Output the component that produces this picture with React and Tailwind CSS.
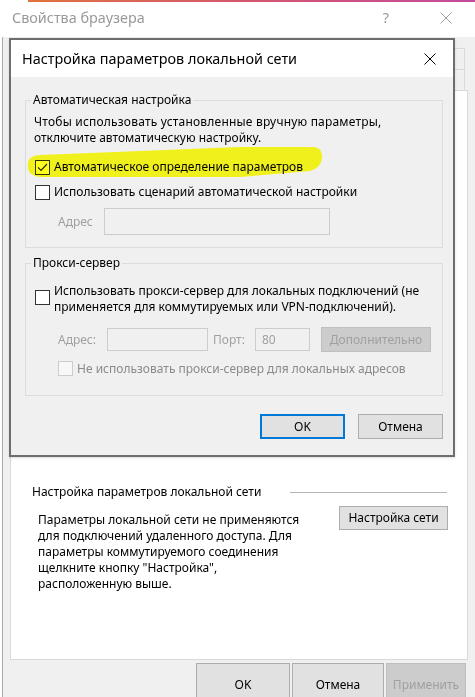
function Checkbox({ checked, disabled, className = '' }) {
  return (
    <span
      className={`flex h-[15px] w-[15px] shrink-0 items-center justify-center border ${
        disabled ? 'border-[#cccccc] bg-[#f7f7f7]' : 'border-[#333333] bg-white'
      } ${className}`}
    >
      {checked && (
        <svg width="11" height="9" viewBox="0 0 11 9">
          <path d="M1 4.3 L4 7.4 L10 1" fill="none" stroke="#222222" strokeWidth="1.1" />
        </svg>
      )}
    </span>
  )
}

function CloseIcon({ color = '#000000', size = 12 }) {
  return (
    <svg width={size} height={size} viewBox="0 0 12 12" className="shrink-0">
      <path d="M0.5 0.5 L11.5 11.5 M11.5 0.5 L0.5 11.5" stroke={color} strokeWidth="1" />
    </svg>
  )
}

function Tabs() {
  return (
    <div className="ml-[7px] w-[455px] pt-[11px]">
      <div className="flex h-[21px]">
        <div className="w-[150px] border border-b-0 border-[#d9d9d9]" />
        <div className="w-[150px] border border-b-0 border-l-0 border-[#d9d9d9]" />
        <div className="flex-1 border border-b-0 border-l-0 border-[#d9d9d9]" />
      </div>
      <div className="flex h-[21px]">
        <div className="w-[110px] border border-b-0 border-[#d9d9d9]" />
        <div className="w-[120px] border border-b-0 border-l-0 border-[#d9d9d9]" />
        <div className="w-[110px] border border-b-0 border-l-0 border-[#d9d9d9]" />
        <div className="flex-1 border border-b-0 border-l-0 border-[#d9d9d9]" />
      </div>
    </div>
  )
}

function LanDialog() {
  return (
    <div className="absolute left-[9px] top-[38px] flex h-[419px] w-[446px] flex-col border-2 border-[#6e6e6e] bg-[#f0f0f0] shadow-sm">
      <div className="flex h-[37px] shrink-0 items-center bg-white pl-[11px] pr-[17px] text-[14.4px]">
        <span>Настройка параметров локальной сети</span>
        <span className="ml-auto">
          <CloseIcon />
        </span>
      </div>

      <div className="pl-[14px] pr-[10px]">
        {/* Automatic configuration */}
        <fieldset className="mt-[15px] border border-[#dcdcdc] pb-[12px]">
          <legend className="ml-[5px] px-[2px]">Автоматическая настройка</legend>
          <div className="pl-[8px]">
            <p className="mt-[6px] whitespace-nowrap">
              <span className="tracking-[0.2px]">Чтобы использовать установленные вручную параметры,</span>
              <br />
              отключите автоматическую настройку.
            </p>
            <div className="ml-[1px] mt-[13px] flex h-[16px] items-center gap-[4px]">
              <Checkbox checked />
              <span>Автоматическое определение параметров</span>
            </div>
            <div className="ml-[1px] mt-[9px] flex h-[16px] items-center gap-[4px]">
              <Checkbox />
              <span>Использовать сценарий автоматической настройки</span>
            </div>
            <div className="mt-[8px] flex h-[27px] items-center">
              <span className="ml-[24px] w-[46px] text-[#a0a0a0]">Адрес</span>
              <div className="h-[27px] w-[226px] border border-[#cccccc] bg-[#f0f0f0]" />
            </div>
          </div>
        </fieldset>

        {/* Proxy server */}
        <fieldset className="mt-[7px] border border-[#dcdcdc] pb-[19px]">
          <legend className="ml-[5px] px-[2px]">Прокси-сервер</legend>
          <div className="pl-[8px]">
            <div className="ml-[1px] mt-[12px] flex items-start gap-[4px]">
              <Checkbox className="mt-[7px]" />
              <p className="whitespace-nowrap">
                Использовать прокси-сервер для локальных подключений (не
                <br />
                применяется для коммутируемых или VPN-подключений).
              </p>
            </div>
            <div className="mt-[12px] flex h-[25px] items-center text-[#a0a0a0]">
              <span className="ml-[24px] w-[49px]">Адрес:</span>
              <div className="h-[23px] w-[101px] border border-[#cccccc] bg-[#f0f0f0]" />
              <span className="ml-[5px] w-[42px]">Порт:</span>
              <div className="flex h-[23px] w-[55px] items-center border border-[#cccccc] bg-[#f0f0f0] pl-[6px]">
                80
              </div>
              <div className="ml-[11px] flex h-[25px] w-[110px] items-center justify-center border border-[#bfbfbf] bg-[#cccccc]">
                Дополнительно
              </div>
            </div>
            <div className="ml-[24px] mt-[9px] flex h-[15px] items-center gap-[4px]">
              <Checkbox disabled />
              <span className="text-[#8a8a8a]">Не использовать прокси-сервер для локальных адресов</span>
            </div>
          </div>
        </fieldset>

        <div className="mt-[18px] flex justify-end gap-[13px]">
          <button className="flex h-[25px] w-[85px] items-center justify-center border-2 border-[#0078d7] bg-[#e1e1e1]">
            OK
          </button>
          <button className="flex h-[25px] w-[85px] items-center justify-center border border-[#adadad] bg-[#e1e1e1]">
            Отмена
          </button>
        </div>
      </div>
    </div>
  )
}

export default function App() {
  return (
    <div className="relative h-[697px] w-[475px] overflow-hidden bg-white font-['Noto_Sans','Open_Sans',sans-serif] text-[12px] leading-[16px] text-black">
      <div className="ml-[28px] h-[2px] bg-gradient-to-r from-[#e2723a] via-[#d4556e] to-[#c44a9c]" />

      {/* Browser properties window title */}
      <div className="flex h-[35px] items-center pb-[3px] pl-[12px] text-[14.4px] text-[#999999]">
        <span>Свойства браузера</span>
        <span className="ml-auto">?</span>
        <span className="ml-[51px] mr-[23px]">
          <CloseIcon color="#a0a0a0" />
        </span>
      </div>

      <div className="ml-[2px] h-[660px] border-l border-[#aaaaaa] bg-[#f0f0f0]">
        <Tabs />

        <div className="ml-[7px] flex h-[570px] w-[458px] flex-col border border-[#d9d9d9] bg-white">
          <div className="flex items-center pl-[21px] pr-[20px] pt-[393px]">
            <span>Настройка параметров локальной сети</span>
            <div className="ml-[29px] h-px flex-1 bg-[#b4b4b4]" />
          </div>
          <div className="mt-[6px] flex items-start justify-between pl-[27px] pr-[19px]">
            <p className="mt-[6px]">
              Параметры локальной сети не применяются
              <br />
              для подключений удаленного доступа. Для
              <br />
              параметры коммутируемого соединения
              <br />
              щелкните кнопку "Настройка",
              <br />
              расположенную выше.
            </p>
            <button className="flex h-[24px] w-[109px] items-center justify-center border border-[#adadad] bg-[#e1e1e1]">
              Настройка сети
            </button>
          </div>
        </div>

        <div className="mt-[3px] flex gap-[2px] pl-[193px]">
          <button className="flex h-[44px] w-[94px] items-center justify-center border border-[#adadad] bg-[#e1e1e1]">
            OK
          </button>
          <button className="flex h-[44px] w-[92px] items-center justify-center border border-[#adadad] bg-[#e1e1e1]">
            Отмена
          </button>
          <button className="flex h-[44px] w-[80px] items-center justify-center border border-[#bfbfbf] bg-[#cccccc] text-[#a0a0a0]">
            Применить
          </button>
        </div>
      </div>

      <LanDialog />

      {/* Marker highlight */}
      <svg
        className="pointer-events-none absolute left-0 top-0 mix-blend-multiply"
        width="475"
        height="697"
        viewBox="0 0 475 697"
      >
        <path
          d="M28 162 Q29 156 40 155 L240 147 L314 147 Q323 148 322 158 Q321 168 310 171 L240 177 L40 177 Q29 176 28 168 Z"
          fill="#ffff1e"
        />
      </svg>
    </div>
  )
}
